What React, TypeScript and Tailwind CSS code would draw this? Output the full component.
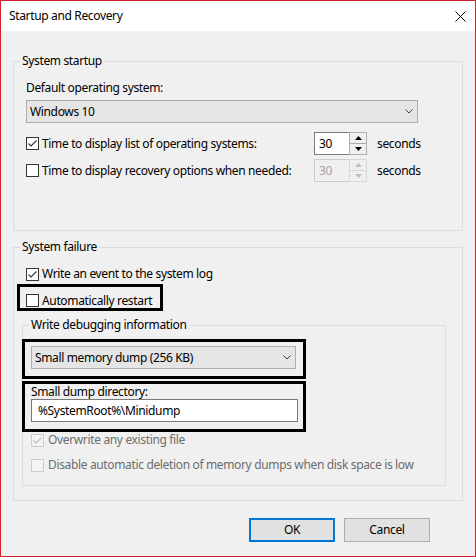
import React from "react";

function CheckBox({ checked = false, disabled = false }: { checked?: boolean; disabled?: boolean }) {
  const border = disabled ? "#cccccc" : "#333333";
  const fill = disabled ? "#f4f4f4" : "#ffffff";
  const mark = disabled ? "#bfbfbf" : "#333333";
  return (
    <svg width="13" height="13" viewBox="0 0 13 13" className="shrink-0 block">
      <rect x="0.5" y="0.5" width="12" height="12" fill={fill} stroke={border} />
      {checked && <path d="M2.5 6.5 L5 9 L10.5 3.5" fill="none" stroke={mark} strokeWidth="1.1" />}
    </svg>
  );
}

function Chevron() {
  return (
    <svg width="8" height="5" viewBox="0 0 8 5" className="block">
      <path d="M0.5 0.5 L4 4 L7.5 0.5" fill="none" stroke="#3c3c3c" strokeWidth="1" />
    </svg>
  );
}

function Tri({ up, color }: { up: boolean; color: string }) {
  return (
    <svg width="7" height="4" viewBox="0 0 7 4" className="block">
      {up ? <path d="M0 4 L3.5 0 L7 4 Z" fill={color} /> : <path d="M0 0 L3.5 4 L7 0 Z" fill={color} />}
    </svg>
  );
}

function Spin({ disabled = false }: { disabled?: boolean }) {
  return (
    <div className="flex h-[23px] w-[53px]">
      <div
        className={
          disabled
            ? "w-[35px] h-full border-y border-l border-[#cccccc] bg-[#f0f0f0] pl-[4px] flex items-center text-[#a0a0a0]"
            : "w-[35px] h-full border-y border-l border-[#7a7a7a] bg-white pl-[4px] flex items-center"
        }
      >
        30
      </div>
      <div className="w-[18px] h-full flex flex-col">
        <div
          className={
            disabled
              ? "h-[12px] border border-[#d9d9d9] bg-[#f0f0f0] flex items-center justify-center"
              : "h-[12px] border border-[#adadad] bg-[#f0f0f0] flex items-center justify-center"
          }
        >
          <Tri up color={disabled ? "#bfbfbf" : "#000000"} />
        </div>
        <div
          className={
            disabled
              ? "h-[11px] border-x border-b border-[#d9d9d9] bg-[#f0f0f0] flex items-center justify-center"
              : "h-[11px] border-x border-b border-[#adadad] bg-[#f0f0f0] flex items-center justify-center"
          }
        >
          <Tri up={false} color={disabled ? "#bfbfbf" : "#000000"} />
        </div>
      </div>
    </div>
  );
}

export default function App() {
  return (
    <div className="w-[476px] h-[557px] border border-[#d0222f] bg-[#f0f0f0] flex flex-col font-['Noto_Sans',sans-serif] text-[12px] leading-[16px] tracking-[-0.35px] text-black">
      {/* Title bar */}
      <div className="h-[30px] bg-white flex items-center justify-between pl-[8px] pr-[9px] shrink-0">
        <span>Startup and Recovery</span>
        <svg width="11" height="11" viewBox="0 0 11 11" className="block">
          <path d="M0.5 0.5 L10.5 10.5 M10.5 0.5 L0.5 10.5" stroke="#000" strokeWidth="1" />
        </svg>
      </div>

      <div className="flex flex-col px-[12px]">
        {/* System startup */}
        <div className="relative mt-[30px] w-[450px] h-[170px] border border-[#dcdcdc] pt-[18px] pl-[12px]">
          <span className="absolute -top-[9px] left-[6px] px-[2px] bg-[#f0f0f0] leading-[16px]">System startup</span>
          <div className="leading-[16px]">Default operating system:</div>
          <div className="mt-[4px] h-[23px] w-[392px] border border-[#adadad] bg-[#e5e5e5] flex items-center justify-between pl-[3px] pr-[4px]">
            <span>Windows 10</span>
            <Chevron />
          </div>
          <div className="mt-[9px] h-[23px] flex items-center">
            <div className="w-[288px] flex items-center gap-[3px]">
              <CheckBox checked />
              <span>Time to display list of operating systems:</span>
            </div>
            <Spin />
            <span className="ml-[10px]">seconds</span>
          </div>
          <div className="mt-[4px] h-[23px] flex items-center">
            <div className="w-[288px] flex items-center gap-[3px]">
              <CheckBox />
              <span>Time to display recovery options when needed:</span>
            </div>
            <Spin disabled />
            <span className="ml-[10px]">seconds</span>
          </div>
        </div>

        {/* System failure */}
        <div className="relative mt-[16px] w-[450px] h-[254px] border border-[#dcdcdc] flex flex-col">
          <span className="absolute -top-[9px] left-[6px] px-[2px] bg-[#f0f0f0] leading-[16px]">System failure</span>
          <div className="mt-[18px] ml-[12px] h-[16px] flex items-center gap-[3px]">
            <CheckBox checked />
            <span>Write an event to the system log</span>
          </div>
          <div className="mt-[2px] ml-[3px] w-[146px] h-[27px] border-[3px] border-black pl-[6px] pt-[7px]">
            <div className="h-[13px] flex items-center gap-[3px]">
              <CheckBox />
              <span>Automatically restart</span>
            </div>
          </div>

          {/* Write debugging information */}
          <div className="relative mt-[14px] ml-[8px] w-[424px] h-[161px] border border-[#dcdcdc] flex flex-col">
            <span className="absolute -top-[9px] left-[6px] px-[2px] bg-[#f0f0f0] leading-[16px]">Write debugging information</span>
            <div className="mt-[13px] -ml-[1px] w-[284px] h-[40px] border-[3px] border-black pt-[4px] pl-[6px]">
              <div className="h-[23px] w-[265px] border border-[#adadad] bg-[#e5e5e5] flex items-center justify-between pl-[3px] pr-[4px]">
                <span>Small memory dump (256 KB)</span>
                <Chevron />
              </div>
            </div>
            <div className="mt-[2px] -ml-[1px] w-[284px] h-[51px] border-[3px] border-black pl-[6px]">
              <div className="leading-[15px]">Small dump directory:</div>
              <div className="h-[23px] w-[267px] border border-[#7a7a7a] bg-white flex items-center pl-[6px]">
                %SystemRoot%\Minidump
              </div>
            </div>
            <div className="ml-[8px] h-[16px] flex items-center gap-[4px] text-[#6d6d6d]">
              <CheckBox checked disabled />
              <span>Overwrite any existing file</span>
            </div>
            <div className="mt-[9px] ml-[8px] h-[16px] flex items-center gap-[4px] text-[#6d6d6d]">
              <CheckBox disabled />
              <span>Disable automatic deletion of memory dumps when disk space is low</span>
            </div>
          </div>
        </div>

        {/* Buttons */}
        <div className="mt-[17px] flex justify-end gap-[9px] pr-[33px]">
          <button className="w-[86px] h-[24px] border-2 border-[#0078d7] bg-[#e1e1e1] flex items-center justify-center">
            OK
          </button>
          <button className="w-[86px] h-[24px] border border-[#adadad] bg-[#e1e1e1] flex items-center justify-center">
            Cancel
          </button>
        </div>
      </div>
    </div>
  );
}
